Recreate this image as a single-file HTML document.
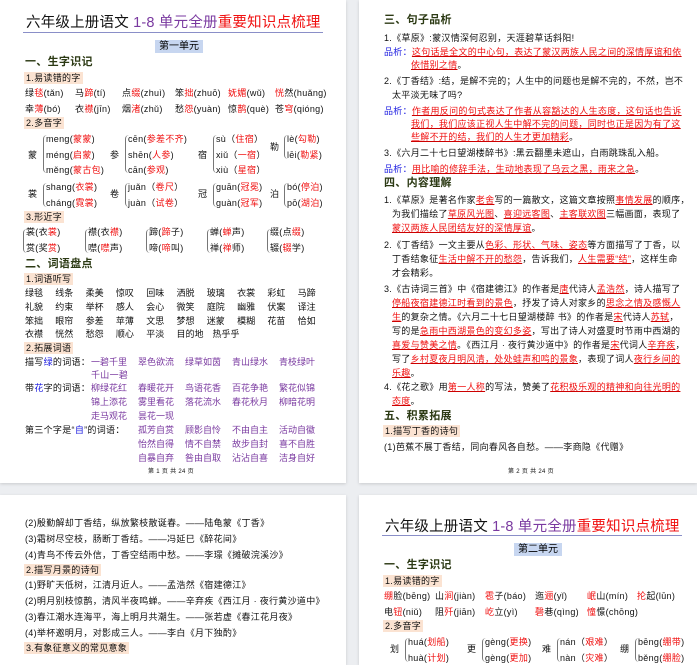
<!DOCTYPE html>
<html><head><meta charset="utf-8"><style>
body{margin:0;width:697px;height:658px;background:#eceef1;position:relative;overflow:hidden;font-family:"Liberation Sans","Noto Sans CJK SC",sans-serif;}
.pg{position:absolute;background:#fff;box-shadow:0 1px 3px rgba(0,0,0,.15);}
.t{position:absolute;font-size:9px;line-height:12px;white-space:nowrap;color:#111;letter-spacing:0.3px;}
.r{color:#f01010}.b{color:#1a1ae0}.p{color:#7a3aa0}
.u{text-decoration:underline;text-decoration-color:#c00;}
.h{font-size:11px;font-weight:bold;color:#2c3a14;}
.s{background:#fbe3d2;padding:0 2px;}
.ttl{position:absolute;font-size:14.5px;line-height:18px;white-space:nowrap;color:#111;letter-spacing:0.2px;}
.ln{position:absolute;height:1px;background:#8a8fc8;}
.unit{position:absolute;background:#c7d6f0;font-size:10px;line-height:13px;padding:0 4px;}
.br{position:absolute;border-left:1px solid #777;border-radius:4px 0 0 4px;width:3px;}
.w{display:inline-block;width:30.3px;letter-spacing:0}
.x{display:inline-block;width:47px;letter-spacing:0}
</style></head><body>
<div class="pg" style="left:0;top:0;width:346px;height:483px"></div>
<div class="pg" style="left:359px;top:0;width:338px;height:483px"></div>
<div class="pg" style="left:0;top:495px;width:346px;height:170px"></div>
<div class="pg" style="left:359px;top:495px;width:338px;height:170px"></div>

<!-- page 1 -->
<div class="ttl" style="left:26px;top:14px">六年级上册语文 <span class="p">1-8 单元全册</span><span class="r">重要知识点梳理</span></div>
<div class="ln" style="left:23px;top:32px;width:300px"></div>
<div class="unit" style="left:155px;top:40px">第一单元</div>
<div class="t h" style="left:25px;top:56px">一、生字识记</div>
<div class="t s" style="left:24px;top:72px">1.易读错的字</div>
<div class="t" style="left:25px;top:87px">绿<span class="r">毯</span>(tǎn)</div>
<div class="t" style="left:75px;top:87px">马<span class="r">蹄</span>(tí)</div>
<div class="t" style="left:122px;top:87px">点<span class="r">缀</span>(zhuì)</div>
<div class="t" style="left:175px;top:87px">笨<span class="r">拙</span>(zhuō)</div>
<div class="t" style="left:228px;top:87px"><span class="r">妩媚</span>(wǔ)</div>
<div class="t" style="left:275px;top:87px"><span class="r">恍</span>然(huǎng)</div>
<div class="t" style="left:25px;top:103px">幸<span class="r">薄</span>(bó)</div>
<div class="t" style="left:75px;top:103px">衣<span class="r">襟</span>(jīn)</div>
<div class="t" style="left:122px;top:103px">烟<span class="r">渚</span>(zhǔ)</div>
<div class="t" style="left:175px;top:103px">愁<span class="r">怨</span>(yuàn)</div>
<div class="t" style="left:228px;top:103px">惊<span class="r">鹊</span>(què)</div>
<div class="t" style="left:275px;top:103px">苍<span class="r">穹</span>(qióng)</div>
<div class="t s" style="left:24px;top:117px">2.多音字</div>
<div class="t" style="left:28px;top:149px">蒙</div><div class="br" style="left:43px;top:135px;height:38px"></div>
<div class="t" style="left:46px;top:133px">meng(<span class="r">蒙蒙</span>)</div>
<div class="t" style="left:46px;top:149px">méng(<span class="r">启蒙</span>)</div>
<div class="t" style="left:46px;top:164px">měng(<span class="r">蒙古包</span>)</div>
<div class="t" style="left:110px;top:149px">参</div><div class="br" style="left:125px;top:135px;height:38px"></div>
<div class="t" style="left:128px;top:133px">cēn(<span class="r">参差不齐</span>)</div>
<div class="t" style="left:128px;top:149px">shēn(<span class="r">人参</span>)</div>
<div class="t" style="left:128px;top:164px">cān(<span class="r">参观</span>)</div>
<div class="t" style="left:198px;top:149px">宿</div><div class="br" style="left:213px;top:135px;height:38px"></div>
<div class="t" style="left:216px;top:133px">sù（<span class="r">住宿</span>）</div>
<div class="t" style="left:216px;top:149px">xiǔ（<span class="r">一宿</span>）</div>
<div class="t" style="left:216px;top:164px">xiù（<span class="r">星宿</span>）</div>
<div class="t" style="left:270px;top:141px">勒</div><div class="br" style="left:284px;top:135px;height:24px"></div>
<div class="t" style="left:287px;top:133px">lè(<span class="r">勾勒</span>)</div>
<div class="t" style="left:287px;top:149px">lēi(<span class="r">勒紧</span>)</div>
<div class="t" style="left:28px;top:188px">裳</div><div class="br" style="left:43px;top:183px;height:24px"></div>
<div class="t" style="left:46px;top:181px">shang(<span class="r">衣裳</span>)</div>
<div class="t" style="left:46px;top:197px">cháng(<span class="r">霓裳</span>)</div>
<div class="t" style="left:110px;top:188px">卷</div><div class="br" style="left:125px;top:183px;height:24px"></div>
<div class="t" style="left:128px;top:181px">juǎn（<span class="r">卷尺</span>）</div>
<div class="t" style="left:128px;top:197px">juàn（<span class="r">试卷</span>）</div>
<div class="t" style="left:198px;top:188px">冠</div><div class="br" style="left:213px;top:183px;height:24px"></div>
<div class="t" style="left:216px;top:181px">guān(<span class="r">冠冕</span>)</div>
<div class="t" style="left:216px;top:197px">guàn(<span class="r">冠军</span>)</div>
<div class="t" style="left:270px;top:188px">泊</div><div class="br" style="left:284px;top:183px;height:24px"></div>
<div class="t" style="left:287px;top:181px">bó(<span class="r">停泊</span>)</div>
<div class="t" style="left:287px;top:197px">pō(<span class="r">湖泊</span>)</div>
<div class="t s" style="left:24px;top:211px">3.形近字</div>
<div class="br" style="left:23px;top:229px;height:24px"></div><div class="t" style="left:26px;top:226px">裳(衣<span class="r">裳</span>)</div><div class="t" style="left:26px;top:242px">赏(奖<span class="r">赏</span>)</div>
<div class="br" style="left:85px;top:229px;height:24px"></div><div class="t" style="left:88px;top:226px">襟(衣<span class="r">襟</span>)</div><div class="t" style="left:88px;top:242px">噤(<span class="r">噤</span>声)</div>
<div class="br" style="left:146px;top:229px;height:24px"></div><div class="t" style="left:149px;top:226px">蹄(<span class="r">蹄</span>子)</div><div class="t" style="left:149px;top:242px">啼(<span class="r">啼</span>叫)</div>
<div class="br" style="left:207px;top:229px;height:24px"></div><div class="t" style="left:210px;top:226px">蝉(<span class="r">蝉</span>声)</div><div class="t" style="left:210px;top:242px">禅(<span class="r">禅</span>师)</div>
<div class="br" style="left:267px;top:229px;height:24px"></div><div class="t" style="left:270px;top:226px">缀(点<span class="r">缀</span>)</div><div class="t" style="left:270px;top:242px">辍(<span class="r">辍</span>学)</div>
<div class="t h" style="left:25px;top:258px">二、词语盘点</div>
<div class="t s" style="left:24px;top:273px">1.词语听写</div>
<div class="t" style="left:25px;top:287px"><span class="w">绿毯</span><span class="w">线条</span><span class="w">柔美</span><span class="w">惊叹</span><span class="w">回味</span><span class="w">洒脱</span><span class="w">玻璃</span><span class="w">衣裳</span><span class="w">彩虹</span><span class="w">马蹄</span></div>
<div class="t" style="left:25px;top:301px"><span class="w">礼貌</span><span class="w">约束</span><span class="w">举杯</span><span class="w">感人</span><span class="w">会心</span><span class="w">微笑</span><span class="w">庭院</span><span class="w">幽雅</span><span class="w">伏案</span><span class="w">译注</span></div>
<div class="t" style="left:25px;top:315px"><span class="w">笨拙</span><span class="w">眼帘</span><span class="w">参差</span><span class="w">苹薄</span><span class="w">文思</span><span class="w">梦想</span><span class="w">迷蒙</span><span class="w">模糊</span><span class="w">花苗</span><span class="w">恰如</span></div>
<div class="t" style="left:25px;top:328px"><span class="w">衣襟</span><span class="w">恍然</span><span class="w">愁怨</span><span class="w">顺心</span><span class="w">平淡</span><span class="w" style="width:36px">目的地</span><span class="w">热乎乎</span></div>
<div class="t s" style="left:24px;top:342px">2.拓展词语</div>
<div class="t" style="left:25px;top:356px">描写<span class="b">绿</span>的词语：</div>
<div class="t p" style="left:91px;top:356px"><span class="x">一碧千里</span><span class="x">翠色欲流</span><span class="x">绿草如茵</span><span class="x">青山绿水</span><span class="x">青枝绿叶</span></div>
<div class="t p" style="left:91px;top:369px">千山一碧</div>
<div class="t" style="left:25px;top:382px">带<span class="b">花</span>字的词语：</div>
<div class="t p" style="left:91px;top:382px"><span class="x">柳绿花红</span><span class="x">春暖花开</span><span class="x">鸟语花香</span><span class="x">百花争艳</span><span class="x">繁花似锦</span></div>
<div class="t p" style="left:91px;top:396px"><span class="x">锦上添花</span><span class="x">雾里看花</span><span class="x">落花流水</span><span class="x">春花秋月</span><span class="x">柳暗花明</span></div>
<div class="t p" style="left:91px;top:410px"><span class="x">走马观花</span><span class="x">昙花一现</span></div>
<div class="t" style="left:25px;top:424px">第三个字是“<span class="b">自</span>”的词语：</div>
<div class="t p" style="left:138px;top:424px"><span class="x">孤芳自赏</span><span class="x">顾影自怜</span><span class="x">不由自主</span><span class="x">活动自徽</span></div>
<div class="t p" style="left:138px;top:438px"><span class="x">怡然自得</span><span class="x">情不自禁</span><span class="x">故步自封</span><span class="x">喜不自胜</span></div>
<div class="t p" style="left:138px;top:452px"><span class="x">自暴自弃</span><span class="x">咎由自取</span><span class="x">沾沾自喜</span><span class="x">洁身自好</span></div>
<div class="t" style="left:148px;top:466px;font-size:6px">第 1 页 共 24 页</div>

<!-- page 2 -->
<div class="t h" style="left:384px;top:14px">三、句子品析</div>
<div class="t" style="left:384px;top:32px">1.《草原》:蒙汉情深何忍别，天涯碧草话斜阳!</div>
<div class="t" style="left:384px;top:46px"><span class="b">品析：</span><span class="r u">这句话是全文的中心句，表达了蒙汉两族人民之间的深情厚谊和依</span></div>
<div class="t" style="left:411px;top:59px"><span class="r u">依惜别之情</span>。</div>
<div class="t" style="left:384px;top:75px">2.《丁香结》:结，是解不完的；人生中的问题也是解不完的，不然，岂不</div>
<div class="t" style="left:392px;top:89px">太平淡无味了吗?</div>
<div class="t" style="left:384px;top:105px"><span class="b">品析：</span><span class="r u">作者用反问的句式表达了作者从容豁达的人生态度，这句话也告诉</span></div>
<div class="t r u" style="left:411px;top:118px">我们，我们应该正视人生中解不完的问题，同时也正是因为有了这</div>
<div class="t" style="left:411px;top:131px"><span class="r u">些解不开的结，我们的人生才更加精彩</span>。</div>
<div class="t" style="left:384px;top:147px">3.《六月二十七日望湖楼醉书》:黑云翻墨未遮山，白雨跳珠乱入船。</div>
<div class="t" style="left:384px;top:163px"><span class="b">品析：</span><span class="r u">用比喻的修辞手法，生动地表现了乌云之黑，雨来之急</span>。</div>
<div class="t h" style="left:384px;top:177px">四、内容理解</div>
<div class="t" style="left:384px;top:194px">1.《草原》是著名作家<span class="r u">老舍</span>写的一篇散文，这篇文章按照<span class="r u">事情发展</span>的顺序，</div>
<div class="t" style="left:392px;top:208px">为我们描绘了<span class="r u">草原风光图</span>、<span class="r u">喜迎远客图</span>、<span class="r u">主客联欢图</span>三幅画面，表现了</div>
<div class="t" style="left:392px;top:222px"><span class="r u">蒙汉两族人民团结友好的深情厚谊</span>。</div>
<div class="t" style="left:384px;top:239px">2.《丁香结》一文主要从<span class="r u">色彩、形状、气味、姿态</span>等方面描写了丁香，以</div>
<div class="t" style="left:392px;top:253px">丁香结象征<span class="r u">生活中解不开的愁怨</span>，告诉我们，<span class="r u">人生需要“结”</span>，这样生命</div>
<div class="t" style="left:392px;top:267px">才会精彩。</div>
<div class="t" style="left:384px;top:283px">3.《古诗词三首》中《宿建德江》的作者是<span class="r u">唐</span>代诗人<span class="r u">孟浩然</span>，诗人描写了</div>
<div class="t" style="left:392px;top:297px"><span class="r u">停船夜宿建德江时看到的景色</span>，抒发了诗人对家乡的<span class="r u">思念之情及感慨人</span></div>
<div class="t" style="left:392px;top:311px"><span class="r u">生</span>的复杂之情。《六月二十七日望湖楼醉 书》的作者是<span class="r u">宋</span>代诗人<span class="r u">苏轼</span>，</div>
<div class="t" style="left:392px;top:325px">写的是<span class="r u">急雨中西湖景色的变幻多姿</span>，写出了诗人对盛夏时节雨中西湖的</div>
<div class="t" style="left:392px;top:339px"><span class="r u">喜爱与赞美之情</span>。《西江月 · 夜行黄沙道中》的作者是<span class="r u">宋</span>代词人<span class="r u">辛弃疾</span>，</div>
<div class="t" style="left:392px;top:353px">写了<span class="r u">乡村夏夜月明风清，处处蛙声和鸣的景象</span>，表现了词人<span class="r u">夜行乡间的</span></div>
<div class="t" style="left:392px;top:367px"><span class="r u">乐趣</span>。</div>
<div class="t" style="left:384px;top:381px">4.《花之歌》用<span class="r u">第一人称</span>的写法，赞美了<span class="r u">花积极乐观的精神和向往光明的</span></div>
<div class="t" style="left:392px;top:395px"><span class="r u">态度</span>。</div>
<div class="t h" style="left:384px;top:410px">五、积累拓展</div>
<div class="t s" style="left:383px;top:425px">1.描写丁香的诗句</div>
<div class="t" style="left:384px;top:441px">(1)芭蕉不展丁香结，同向春风各自愁。——李商隐《代赠》</div>
<div class="t" style="left:508px;top:466px;font-size:6px">第 2 页 共 24 页</div>

<!-- page 3 -->
<div class="t" style="left:25px;top:517px">(2)殷勤解却丁香结，纵放繁枝散诞春。——陆龟蒙《丁香》</div>
<div class="t" style="left:25px;top:533px">(3)霜树尽空枝，肠断丁香结。——冯延巳《醉花间》</div>
<div class="t" style="left:25px;top:549px">(4)青鸟不传云外信，丁香空结雨中愁。——李璟《摊破浣溪沙》</div>
<div class="t s" style="left:24px;top:564px">2.描写月景的诗句</div>
<div class="t" style="left:25px;top:579px">(1)野旷天低树，江清月近人。——孟浩然《宿建德江》</div>
<div class="t" style="left:25px;top:595px">(2)明月别枝惊鹊，清风半夜鸣蝉。——辛弃疾《西江月 · 夜行黄沙道中》</div>
<div class="t" style="left:25px;top:611px">(3)春江潮水连海平，海上明月共潮生。——张若虚《春江花月夜》</div>
<div class="t" style="left:25px;top:627px">(4)举杯邀明月，对影成三人。——李白《月下独酌》</div>
<div class="t s" style="left:24px;top:642px">3.有象征意义的常见意象</div>

<!-- page 4 -->
<div class="ttl" style="left:385px;top:518px">六年级上册语文 <span class="p">1-8 单元全册</span><span class="r">重要知识点梳理</span></div>
<div class="ln" style="left:382px;top:535px;width:300px"></div>
<div class="unit" style="left:514px;top:543px">第二单元</div>
<div class="t h" style="left:384px;top:559px">一、生字识记</div>
<div class="t s" style="left:383px;top:575px">1.易读错的字</div>
<div class="t" style="left:384px;top:590px"><span class="r">绷</span>脸(bēng)</div>
<div class="t" style="left:435px;top:590px">山<span class="r">涧</span>(jiàn)</div>
<div class="t" style="left:485px;top:590px"><span class="r">雹</span>子(báo)</div>
<div class="t" style="left:535px;top:590px">迤<span class="r">逦</span>(yǐ)</div>
<div class="t" style="left:587px;top:590px"><span class="r">岷</span>山(mín)</div>
<div class="t" style="left:637px;top:590px"><span class="r">抡</span>起(lūn)</div>
<div class="t" style="left:384px;top:606px">电<span class="r">钮</span>(niǔ)</div>
<div class="t" style="left:435px;top:606px">阻<span class="r">歼</span>(jiān)</div>
<div class="t" style="left:485px;top:606px"><span class="r">屹</span>立(yì)</div>
<div class="t" style="left:535px;top:606px"><span class="r">磬</span>巷(qìng)</div>
<div class="t" style="left:587px;top:606px"><span class="r">憧</span>憬(chōng)</div>
<div class="t s" style="left:383px;top:620px">2.多音字</div>
<div class="t" style="left:390px;top:643px">划</div><div class="br" style="left:405px;top:638px;height:24px"></div>
<div class="t" style="left:408px;top:636px">huá(<span class="r">划船</span>)</div><div class="t" style="left:408px;top:652px">huà(<span class="r">计划</span>)</div>
<div class="t" style="left:467px;top:643px">更</div><div class="br" style="left:482px;top:638px;height:24px"></div>
<div class="t" style="left:485px;top:636px">gèng(<span class="r">更换</span>)</div><div class="t" style="left:485px;top:652px">gèng(<span class="r">更加</span>)</div>
<div class="t" style="left:542px;top:643px">难</div><div class="br" style="left:557px;top:638px;height:24px"></div>
<div class="t" style="left:560px;top:636px">nán（<span class="r">艰难</span>）</div><div class="t" style="left:560px;top:652px">nàn（<span class="r">灾难</span>）</div>
<div class="t" style="left:620px;top:643px">绷</div><div class="br" style="left:635px;top:638px;height:24px"></div>
<div class="t" style="left:638px;top:636px">bēng(<span class="r">绷带</span>)</div><div class="t" style="left:638px;top:652px">běng(<span class="r">绷脸</span>)</div>
</body></html>
